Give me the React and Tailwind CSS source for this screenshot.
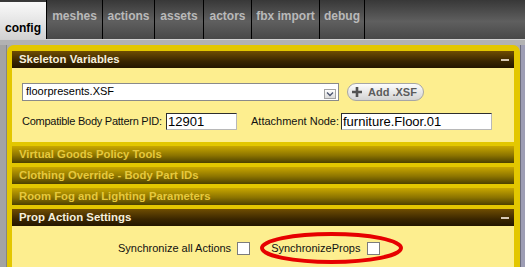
const tabs = [
  { label: 'meshes', w: 'w-[56px]' },
  { label: 'actions', w: 'w-[52px]' },
  { label: 'assets', w: 'w-[49px]' },
  { label: 'actors', w: 'w-[48px]' },
  { label: 'fbx import', w: 'w-[68px]' },
];

function Minus() {
  return <div className="w-[8px] h-[2px] bg-[#d8cab6]" />;
}

function OpenHeader({ title }) {
  return (
    <div className="h-[17px] flex items-center justify-between pl-[7px] pr-[5px] bg-[linear-gradient(to_bottom,#6f4d02,#3a2600_60%,#241600)]">
      <span className="text-[11.4px] font-bold text-[#f6efdc] leading-none">{title}</span>
      <Minus />
    </div>
  );
}

function ClosedHeader({ title }) {
  return (
    <div className="h-[17px] flex items-center pl-[7px] bg-[linear-gradient(to_bottom,#c9a700,#8c7400_55%,#4c4000)]">
      <span className="text-[11.3px] font-bold text-[#e6c83c] leading-none">{title}</span>
    </div>
  );
}

function TextBox({ value, className = '' }) {
  return (
    <div
      className={`h-[17px] bg-white border border-[#2e2e2e] border-r-[#b8b8b8] border-b-[#b8b8b8] pl-[1px] flex items-center text-[13px] leading-none text-black ${className}`}
    >
      {value}
    </div>
  );
}

function Checkbox() {
  return <div className="w-[13px] h-[13px] bg-white border border-[#7c7c7c]" />;
}

export default function App() {
  return (
    <div className="relative w-[525px] h-[267px] overflow-hidden flex flex-col bg-[#adadad] font-['Liberation_Sans',Arial,sans-serif]">
      {/* tab bar */}
      <div className="h-[39px] flex bg-[linear-gradient(to_bottom,#383838,#5f5f5f_55%,#484848)]">
        <div className="w-[46px] mt-[2px] flex items-end justify-center pb-[4px] bg-[linear-gradient(to_bottom,#fafafa,#d2d2d2)]">
          <span className="text-[12px] font-bold text-black leading-[14px]">config</span>
        </div>
        {tabs.map((t) => (
          <div
            key={t.label}
            className={`${t.w} border-l border-black flex justify-center pt-[9px]`}
          >
            <span className="text-[12px] font-bold text-[#b9b9b9] leading-[14px] whitespace-nowrap">
              {t.label}
            </span>
          </div>
        ))}
        <div className="w-[46px] border-x border-black flex justify-center pt-[9px]">
          <span className="text-[12px] font-bold text-[#b9b9b9] leading-[14px]">debug</span>
        </div>
      </div>
      <div className="h-[1px] bg-[#d0d0d0]" />
      <div className="h-[5px] bg-[#b2b2b2]" />

      <div className="flex flex-1 min-h-0">
        <div className="w-[7px] bg-[#a3a3a3] border-r border-[#858585]" />
        {/* main panel */}
        <div className="flex-1 flex flex-col gap-[4px] bg-[#e3c700] border-l-[5px] border-r-[6px] border-t-[6px] border-[#e3c700] rounded-t-[7px]">
          <div className="flex flex-col">
            <OpenHeader title="Skeleton Variables" />
            <div className="h-[74px] bg-[#fdee8f] pt-[15px] pl-[10px] flex flex-col">
              <div className="flex items-center gap-[8px]">
                <div className="w-[317px] h-[18px] bg-white border border-[#8a8a8a] flex items-end justify-between pl-[3px] pr-[2px] pb-[1px]">
                  <span className="text-[11px] leading-[15px] text-black self-center">floorpresents.XSF</span>
                  <div className="w-[12px] h-[10px] border border-[#a3a3a3] bg-[linear-gradient(to_bottom,#ffffff,#dadada)] flex items-center justify-center">
                    <svg width="8" height="6" viewBox="0 0 8 6">
                      <path d="M1 1.5 L4 4.5 L7 1.5" fill="none" stroke="#4d5670" strokeWidth="1.4" />
                    </svg>
                  </div>
                </div>
                <div className="w-[77px] h-[18px] rounded-full border border-[#a6a6a6] bg-[linear-gradient(to_bottom,#fdfdfd,#d3d3d3)] flex items-center pl-[3px] gap-[5px]">
                  <svg width="12" height="12" viewBox="0 0 12 12">
                    <path d="M6 1 V11 M1 6 H11" stroke="#525252" strokeWidth="2.6" />
                  </svg>
                  <span className="text-[11px] font-bold text-[#5c5c5c] leading-none">Add .XSF</span>
                </div>
              </div>
              <div className="flex items-center mt-[12px] text-[11px] text-[#111]">
                <span className="w-[144px] whitespace-nowrap tracking-[-0.25px]">Compatible Body Pattern PID:</span>
                <TextBox value="12901" className="w-[71px]" />
                <span className="ml-[14px] w-[90px] whitespace-nowrap">Attachment Node:</span>
                <TextBox value="furniture.Floor.01" className="w-[151px]" />
              </div>
            </div>
          </div>
          <ClosedHeader title="Virtual Goods Policy Tools" />
          <ClosedHeader title="Clothing Override - Body Part IDs" />
          <ClosedHeader title="Room Fog and Lighting Parameters" />
          <div className="flex flex-col flex-1">
            <OpenHeader title="Prop Action Settings" />
            <div className="flex-1 bg-[#fdee8f] pt-[16px] pl-[106px] flex items-start text-[11px] text-[#111]">
              <span className="leading-[13px] whitespace-nowrap">Synchronize all Actions</span>
              <div className="ml-[6px]"><Checkbox /></div>
              <span className="ml-[21px] leading-[13px] whitespace-nowrap">SynchronizeProps</span>
              <div className="ml-[7px]"><Checkbox /></div>
            </div>
          </div>
        </div>
        <div className="w-[5px] bg-[#9d9db4] border-l border-[#6d6d7d]" />
      </div>

      {/* annotation */}
      <svg className="absolute left-[258px] top-[230px]" width="148" height="36" viewBox="0 0 148 36">
        <ellipse cx="73.5" cy="18" rx="69.5" ry="14" fill="none" stroke="#e60000" strokeWidth="4" />
      </svg>
    </div>
  );
}
